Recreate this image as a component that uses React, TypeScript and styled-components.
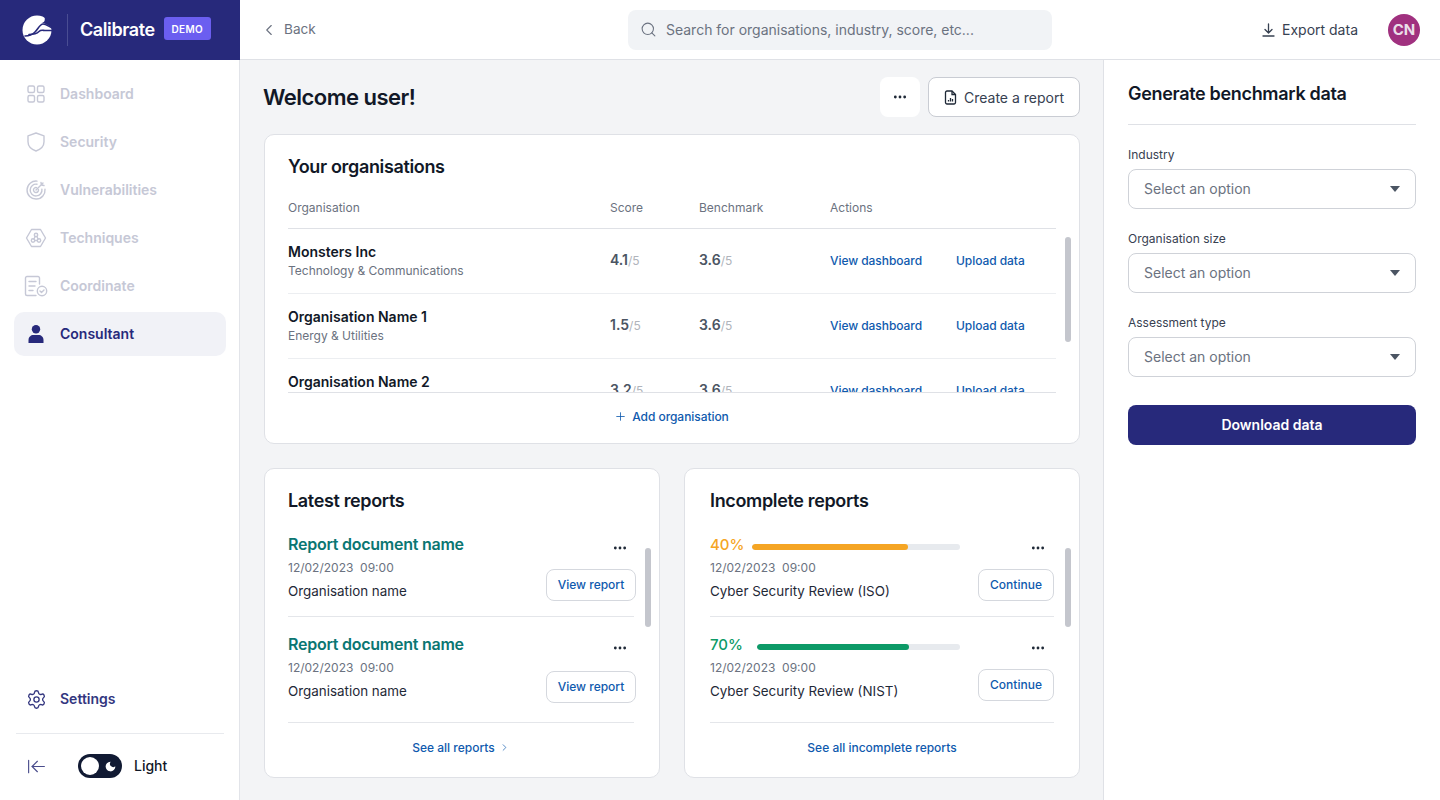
import React from "react";
import styled, { createGlobalStyle } from "styled-components";
import { ChevronLeft, Search, ChevronRight, Plus, Ellipsis, Settings, ArrowLeftToLine, Moon } from "lucide-react";

const Global = createGlobalStyle`
  html, body { margin: 0; padding: 0; height: 100%; }
  body { font-family: Inter, "Liberation Sans", sans-serif; background: #fff; color: #111827; overflow: hidden; }
  * { box-sizing: border-box; }
`;

const Page = styled.div`display: flex; width: 1440px; height: 800px; overflow: hidden;`;
const Side = styled.aside`width: 240px; flex: none; display: flex; flex-direction: column; border-right: 1px solid #e2e4e9; background: #fff;`;
const Brand = styled.div`height: 60px; flex: none; margin-right: -1px; background: #27297b; display: flex; align-items: center; padding-left: 22px; color: #fff;`;
const BrandDivider = styled.span`width: 1px; height: 32px; background: #4a4d93; margin: 0 12px 0 15px;`;
const BrandName = styled.span`font-size: 18px; font-weight: 600; letter-spacing: -0.4px; margin-bottom: 2px;`;
const DemoBadge = styled.span`margin-left: 9px; margin-bottom: 3px; width: 47px; height: 23px; border-radius: 3px; background: #6b5ef0; font-size: 10px; font-weight: 600; letter-spacing: .3px; display: flex; align-items: center; justify-content: center;`;
const Nav = styled.nav`flex: 1; padding: 12px 13px 0 14px; display: flex; flex-direction: column; gap: 4px;`;
const NavItem = styled.a<{ $active?: boolean }>`
  height: 44px; border-radius: 10px; display: flex; align-items: center; gap: 12px; padding-left: 10px;
  font-size: 14px; font-weight: 600; color: ${p => (p.$active ? "#27297b" : "#c6c8d6")};
  background: ${p => (p.$active ? "#f1f2f7" : "transparent")};
`;
const NavIcon = styled.span`width: 24px; height: 24px; display: flex; align-items: center; justify-content: center; flex: none;`;
const NudgedLabel = styled.span`margin-top: -2px;`;
const SideFoot = styled.div`padding: 0 15px 0 16px;`;
const SettingsRow = styled.a`height: 44px; display: flex; align-items: center; gap: 12px; padding-left: 8px; font-size: 14px; font-weight: 600; color: #33367f; margin-bottom: 12px;`;
const FootBar = styled.div`border-top: 1px solid #e8eaee; height: 67px; padding: 0 0 2px 8px; display: flex; align-items: center; color: #4a4d8c;`;
const Toggle = styled.span`width: 44px; height: 24px; border-radius: 12px; background: #111a33; margin-left: 30px; display: flex; align-items: center; justify-content: space-between; padding: 0 5px 0 3px; color: #fff;`;
const Knob = styled.span`width: 18px; height: 18px; border-radius: 50%; background: #fff;`;
const ToggleLabel = styled.span`margin: -2px 0 0 12px; font-size: 14px; font-weight: 500; color: #111827;`;

const Body = styled.div`flex: 1; min-width: 0; display: flex; flex-direction: column;`;
const Top = styled.header`height: 60px; flex: none; border-bottom: 1px solid #dfe1e6; display: flex; align-items: center; padding: 0 20px; position: relative; justify-content: space-between;`;
const Back = styled.a`display: flex; align-items: center; gap: 6px; font-size: 13.6px; color: #6b7280; width: 368px;`;
const SearchBox = styled.div`width: 424px; height: 40px; border-radius: 8px; background: #f1f3f6; display: flex; align-items: center; gap: 9px; padding-left: 12px; font-size: 14px; letter-spacing: -0.01px; color: #6b7280;`;
const TopRight = styled.div`display: flex; align-items: center; flex: 1; justify-content: flex-end;`;
const Export = styled.a`display: flex; align-items: center; gap: 7px; font-size: 14px; color: #374151;`;
const Avatar = styled.span`width: 32px; height: 32px; border-radius: 50%; background: #a0317f; color: #eadfe9; margin-left: 30px; font-size: 15px; font-weight: 700; display: flex; align-items: center; justify-content: center;`;

const Content = styled.div`flex: 1; display: flex; min-height: 0;`;
const Main = styled.main`flex: 1; min-width: 0; background: #f3f4f6; padding: 17px 23px 0 24px; display: flex; flex-direction: column;`;
const TitleRow = styled.div`height: 40px; display: flex; align-items: center; margin-bottom: 17px;`;
const PageTitle = styled.h1`flex: 1; margin: 0 0 0 -1px; font-size: 22px; line-height: 40px; font-weight: 600; letter-spacing: -0.52px; color: #111827;`;
const DotsBtn = styled.button`width: 40px; height: 40px; border: 0; border-radius: 8px; background: #fff; color: #1f2937; display: flex; align-items: center; justify-content: center; margin-right: 8px; padding: 0;`;
const CreateBtn = styled.button`width: 152px; height: 40px; border: 1px solid #c9ccd3; border-radius: 8px; background: #fff; color: #374151; font: 400 14px Inter, sans-serif; display: flex; align-items: center; justify-content: center; gap: 7px; padding: 0;`;

const Card = styled.section`background: #fff; border: 1px solid #dfe1e6; border-radius: 10px; position: relative;`;
const OrgCard = styled(Card)`height: 310px; padding: 0 23px;`;
const CardTitle = styled.h2`margin: 0; font-size: 18px; font-weight: 600; line-height: 24px; letter-spacing: -0.35px; color: #111827;`;
const OrgTitle = styled(CardTitle)`padding-top: 20px; height: 44px;`;
const Cols = "322px 89px 131px 126px 1fr";
const HeadRow = styled.div`display: grid; grid-template-columns: ${Cols}; height: 50px; align-items: center; padding-top: 8px; font-size: 12px; color: #6b7280; border-bottom: 1px solid #dfe1e6;`;
const RowScroll = styled.div`height: 164px; overflow: hidden; border-bottom: 1px solid #dfe1e6;`;
const OrgRow = styled.div`display: grid; grid-template-columns: ${Cols}; height: 65px; align-items: center; border-bottom: 1px solid #eceef1;`;
const OrgCell = styled.div`padding-top: 1px;`;
const OrgName = styled.div`font-size: 14px; font-weight: 600; line-height: 18px; color: #111827;`;
const OrgSub = styled.div`font-size: 12px; line-height: 18px; margin-top: 1px; letter-spacing: -0.01px; color: #6b7280;`;
const Score = styled.div`font-size: 14px; font-weight: 600; margin-top: -3px; color: #4b5563;`;
const ScoreOf = styled.span`font-size: 12px; font-weight: 400; color: #b0b4bb;`;
const TableLink = styled.a`font-size: 12px; font-weight: 500; letter-spacing: -0.06px; margin-top: -2px; color: #0f5aae;`;
const AddWrap = styled.div`height: 48px; display: flex; align-items: center; justify-content: center; gap: 5px; padding: 0 1px 2px 0; font-size: 12px; font-weight: 500; letter-spacing: -0.06px; color: #0f5aae;`;
const Thumb = styled.span<{ $t: number; $h: number }>`position: absolute; right: 8px; top: ${p => p.$t}px; width: 6px; height: ${p => p.$h}px; border-radius: 3px; background: #c4c6cd;`;

const TwoCols = styled.div`display: grid; grid-template-columns: 396px 396px; gap: 24px; margin-top: 24px;`;
const ReportCard = styled(Card)<{ $pl: number }>`height: 310px; padding: 20px 25px 0 ${p => p.$pl}px;`;
const ReportList = styled.div`margin: 19px -2px 0 0; padding-right: 2px; height: 191px; overflow: hidden;`;
const Report = styled.div<{ $h: number; $pt: number }>`height: ${p => p.$h}px; position: relative; border-bottom: 1px solid #e4e6ea; padding-top: ${p => p.$pt}px;`;
const ReportName = styled.div`font-size: 16px; line-height: 22px; font-weight: 600; letter-spacing: -0.25px; color: #0a7672;`;
const DateLine = styled.div`font-size: 12px; line-height: 16px; margin-top: 5px; color: #6b7280; white-space: pre;`;
const Org = styled.div`font-size: 13.4px; line-height: 20px; margin-top: 5px; color: #1f2937;`;
const RowDots = styled.span<{ $r: number; $t: number }>`position: absolute; right: ${p => p.$r}px; top: ${p => p.$t}px; color: #1f2937; display: flex;`;
const OutlineBtn = styled.a<{ $top: number; $w: number; $r: number }>`position: absolute; right: ${p => p.$r}px; top: ${p => p.$top}px; width: ${p => p.$w}px; height: 32px; padding-bottom: 2px; border: 1px solid #d5d8de; border-radius: 8px; background: #fff; font-size: 12px; font-weight: 500; color: #0f5aae; display: flex; align-items: center; justify-content: center;`;
const Progress = styled.div`display: flex; align-items: center; height: 22px; width: 250px;`;
const Pct = styled.span<{ $c: string }>`font-size: 15px; font-weight: 500; color: ${p => p.$c};`;
const Track = styled.div<{ $ml: number }>`flex: 1; margin: 6px 0 0 ${p => p.$ml}px; height: 6px; border-radius: 3px; background: #e7eaee; overflow: hidden;`;
const Fill = styled.div<{ $c: string }>`height: 100%; border-radius: 3px; background: ${p => p.$c};`;
const SeeAll = styled.div`height: 48px; display: flex; align-items: center; justify-content: center; gap: 4px; font-size: 12px; font-weight: 500; color: #0f5aae;`;

const Panel = styled.aside`width: 337px; flex: none; background: #fff; border-left: 1px solid #dfe1e6; padding: 0 24px;`;
const PanelTitle = styled.h2`margin: 0; height: 65px; border-bottom: 1px solid #dfe1e6; font-size: 18px; font-weight: 600; line-height: 24px; padding-top: 22px; letter-spacing: -0.32px; color: #111827;`;
const Field = styled.div`height: 84px; padding-top: 22px;`;
const FieldLabel = styled.label`display: block; font-size: 12px; line-height: 16px; color: #374151; margin-bottom: 6px;`;
const Select = styled.div`height: 40px; border: 1px solid #cfd2d8; border-radius: 8px; display: flex; align-items: center; justify-content: space-between; padding: 0 15px; font-size: 14px; color: #6b7280;`;
const Caret = styled.span`width: 0; height: 0; border-left: 5px solid transparent; border-right: 5px solid transparent; border-top: 6px solid #4b5563;`;
const DownloadBtn = styled.button`width: 100%; height: 40px; margin-top: 28px; border: 0; border-radius: 8px; background: #27297b; color: #fff; font: 600 14px Inter, sans-serif; display: block; padding: 0 0 2px;`;

const LogoMark = () => (
  <svg width="30" height="30" viewBox="0 0 30 30">
    <circle cx="15" cy="15" r="14.5" fill="#fff" />
    <path d="M22 0C24 6 22 8 19 8c3 0 6 1 11 5V0z" fill="#27297b" />
    <path d="M3 21c4 0 7-1 10-4s5-8 8-8 5 2 9 4" fill="none" stroke="#27297b" strokeWidth="1.6" strokeLinecap="round" />
    <path d="M7 19.500c5 0 8-1 10-3s4-1 6-1h7" fill="none" stroke="#27297b" strokeWidth="1.6" strokeLinecap="round" />
  </svg>
);
const IC = { fill: "none", stroke: "#c6c8d6", strokeWidth: 1.4, strokeLinecap: "round", strokeLinejoin: "round" } as const;
const GridIcon = () => (
  <svg width="20" height="20" viewBox="0 0 20 20" {...IC}>
    <rect x="2" y="2" width="6.5" height="6.5" rx="1.5" /><rect x="11.5" y="2" width="6.5" height="6.5" rx="1.5" />
    <rect x="2" y="11.5" width="6.5" height="6.5" rx="1.5" /><rect x="11.5" y="11.5" width="6.5" height="6.5" rx="1.5" />
  </svg>
);
const ShieldIcon = () => (
  <svg width="22" height="22" viewBox="0 0 22 22" {...IC}><path d="M11 2l8 2.800v6c0 4.600-3.400 7.600-8 9.200-4.600-1.600-8-4.600-8-9.200v-6z" /></svg>
);
const TargetIcon = () => (
  <svg width="22" height="22" viewBox="0 0 22 22" {...IC}>
    <path d="M12 2.100a9 9 0 1 0 8 8" /><path d="M12 5.200a5.900 5.900 0 1 0 4.900 4.900" /><path d="M11.600 8.600a2.500 2.500 0 1 0 1.800 1.800" /><path d="M11 11l7-7M16 3.500l.5 2.500 2.500.5" />
  </svg>
);
const HexIcon = () => (
  <svg width="22" height="22" viewBox="0 0 22 22" {...IC}>
    <path d="M6.500 2.500h9l5 8.500-5 8.500h-9l-5-8.500z" /><circle cx="11" cy="8" r="1.700" /><circle cx="8" cy="13.500" r="1.700" /><circle cx="14" cy="13.500" r="1.700" /><path d="M10.100 9.500l-1.200 2.500M11.900 9.500l1.200 2.500M9.700 13.500h2.600" />
  </svg>
);
const DocCheckIcon = () => (
  <svg width="24" height="22" viewBox="0 0 24 22" {...IC}>
    <path d="M15.500 9V3a1.500 1.500 0 0 0-1.500-1.500H3A1.500 1.500 0 0 0 1.500 3v16A1.500 1.500 0 0 0 3 20.500h9" /><path d="M5 6.500h7M5 11h6M5 15.500h4" />
    <circle cx="18" cy="16" r="4.700" /><path d="M16 16l1.500 1.500 2.500-2.500" />
  </svg>
);
const PersonIcon = () => (
  <svg width="16" height="18" viewBox="0 0 16 18" fill="#27297b"><circle cx="8" cy="4.300" r="4.200" /><path d="M0.500 18v-3c0-3 2.300-5 5-5h5c2.700 0 5 2 5 5v3z" /></svg>
);
const ReportIcon = () => (
  <svg width="13" height="15" viewBox="0 0 13 15" fill="none" stroke="#1f2937" strokeWidth="1.300">
    <path d="M8 1H3a1.500 1.500 0 0 0-1.500 1.500v10A1.500 1.500 0 0 0 3 14h7a1.500 1.500 0 0 0 1.500-1.500V4.500z" /><path d="M8 1v3.500h3.500" /><path d="M4.500 11.500V10M6.500 11.500V8M8.500 11.500V9" />
  </svg>
);
const ExportIcon = () => (
  <svg width="13" height="14" viewBox="0 0 13 14" fill="none" stroke="#374151" strokeWidth="1.300" strokeLinecap="round" strokeLinejoin="round">
    <path d="M6.500 1v8.500M3 6.500l3.500 3.500L10 6.500M1 13h11" />
  </svg>
);

const orgs = [
  ["Monsters Inc", "Technology & Communications", "4.1"],
  ["Organisation Name 1", "Energy & Utilities", "1.5"],
  ["Organisation Name 2", "Retail", "3.2"],
];

export default function App() {
  return (
    <Page>
      <Global />
      <Side>
        <Brand><LogoMark /><BrandDivider /><BrandName>Calibrate</BrandName><DemoBadge>DEMO</DemoBadge></Brand>
        <Nav>
          <NavItem><NavIcon><GridIcon /></NavIcon><NudgedLabel>Dashboard</NudgedLabel></NavItem>
          <NavItem><NavIcon><ShieldIcon /></NavIcon><NudgedLabel>Security</NudgedLabel></NavItem>
          <NavItem><NavIcon><TargetIcon /></NavIcon><NudgedLabel>Vulnerabilities</NudgedLabel></NavItem>
          <NavItem><NavIcon><HexIcon /></NavIcon><NudgedLabel>Techniques</NudgedLabel></NavItem>
          <NavItem><NavIcon><DocCheckIcon /></NavIcon><NudgedLabel>Coordinate</NudgedLabel></NavItem>
          <NavItem $active><NavIcon><PersonIcon /></NavIcon><NudgedLabel>Consultant</NudgedLabel></NavItem>
        </Nav>
        <SideFoot>
          <SettingsRow><NavIcon><Settings size={21} strokeWidth={1.5} /></NavIcon><NudgedLabel>Settings</NudgedLabel></SettingsRow>
          <FootBar>
            <NavIcon><ArrowLeftToLine size={21} strokeWidth={1.3} /></NavIcon>
            <Toggle><Knob /><Moon size={13} fill="#fff" strokeWidth={0} /></Toggle>
            <ToggleLabel>Light</ToggleLabel>
          </FootBar>
        </SideFoot>
      </Side>
      <Body>
        <Top>
          <Back><ChevronLeft size={18} strokeWidth={1.5} /><NudgedLabel>Back</NudgedLabel></Back>
          <SearchBox><Search size={17} strokeWidth={1.5} />Search for organisations, industry, score, etc...</SearchBox>
          <TopRight>
            <Export><ExportIcon />Export data</Export>
            <Avatar>CN</Avatar>
          </TopRight>
        </Top>
        <Content>
          <Main>
            <TitleRow>
              <PageTitle>Welcome user!</PageTitle>
              <DotsBtn><Ellipsis size={16} strokeWidth={2.2} /></DotsBtn>
              <CreateBtn><ReportIcon />Create a report</CreateBtn>
            </TitleRow>
            <OrgCard>
              <OrgTitle>Your organisations</OrgTitle>
              <HeadRow><span>Organisation</span><span>Score</span><span>Benchmark</span><span>Actions</span></HeadRow>
              <RowScroll>
                {orgs.map(o => (
                  <OrgRow key={o[0]}>
                    <OrgCell><OrgName>{o[0]}</OrgName><OrgSub>{o[1]}</OrgSub></OrgCell>
                    <Score>{o[2]}<ScoreOf>/5</ScoreOf></Score>
                    <Score>3.6<ScoreOf>/5</ScoreOf></Score>
                    <TableLink>View dashboard</TableLink>
                    <TableLink>Upload data</TableLink>
                  </OrgRow>
                ))}
              </RowScroll>
              <AddWrap><Plus size={13} strokeWidth={1.5} />Add organisation</AddWrap>
              <Thumb $t={102} $h={105} />
            </OrgCard>
            <TwoCols>
              <ReportCard $pl={23}>
                <CardTitle>Latest reports</CardTitle>
                <ReportList>
                  <Report $h={85} $pt={1}>
                    <ReportName>Report document name</ReportName>
                    <DateLine>12/02/2023  09:00</DateLine>
                    <Org>Organisation name</Org>
                    <RowDots $r={6} $t={8}><Ellipsis size={16} strokeWidth={2.2} /></RowDots>
                    <OutlineBtn $top={37} $w={90} $r={-2}>View report</OutlineBtn>
                  </Report>
                  <Report $h={106} $pt={16}>
                    <ReportName>Report document name</ReportName>
                    <DateLine>12/02/2023  09:00</DateLine>
                    <Org>Organisation name</Org>
                    <RowDots $r={6} $t={23}><Ellipsis size={16} strokeWidth={2.2} /></RowDots>
                    <OutlineBtn $top={54} $w={90} $r={-2}>View report</OutlineBtn>
                  </Report>
                </ReportList>
                <SeeAll>See all reports<ChevronRight size={11} strokeWidth={1.5} /></SeeAll>
                <Thumb $t={79} $h={79} />
              </ReportCard>
              <ReportCard $pl={25}>
                <CardTitle>Incomplete reports</CardTitle>
                <ReportList>
                  <Report $h={85} $pt={1}>
                    <Progress><Pct $c="#f5a524">40%</Pct><Track $ml={8}><Fill $c="#f5a524" style={{ width: "75%" }} /></Track></Progress>
                    <DateLine>12/02/2023  09:00</DateLine>
                    <Org>Cyber Security Review (ISO)</Org>
                    <RowDots $r={8} $t={8}><Ellipsis size={16} strokeWidth={2.2} /></RowDots>
                    <OutlineBtn $top={37} $w={76} $r={0}>Continue</OutlineBtn>
                  </Report>
                  <Report $h={106} $pt={16}>
                    <Progress><Pct $c="#0d9a67">70%</Pct><Track $ml={14}><Fill $c="#0d9a67" style={{ width: "75%" }} /></Track></Progress>
                    <DateLine>12/02/2023  09:00</DateLine>
                    <Org>Cyber Security Review (NIST)</Org>
                    <RowDots $r={8} $t={23}><Ellipsis size={16} strokeWidth={2.2} /></RowDots>
                    <OutlineBtn $top={52} $w={76} $r={0}>Continue</OutlineBtn>
                  </Report>
                </ReportList>
                <SeeAll>See all incomplete reports</SeeAll>
                <Thumb $t={79} $h={79} />
              </ReportCard>
            </TwoCols>
          </Main>
          <Panel>
            <PanelTitle>Generate benchmark data</PanelTitle>
            <Field><FieldLabel>Industry</FieldLabel><Select><NudgedLabel>Select an option</NudgedLabel><Caret /></Select></Field>
            <Field><FieldLabel>Organisation size</FieldLabel><Select><NudgedLabel>Select an option</NudgedLabel><Caret /></Select></Field>
            <Field><FieldLabel>Assessment type</FieldLabel><Select><NudgedLabel>Select an option</NudgedLabel><Caret /></Select></Field>
            <DownloadBtn>Download data</DownloadBtn>
          </Panel>
        </Content>
      </Body>
    </Page>
  );
}
